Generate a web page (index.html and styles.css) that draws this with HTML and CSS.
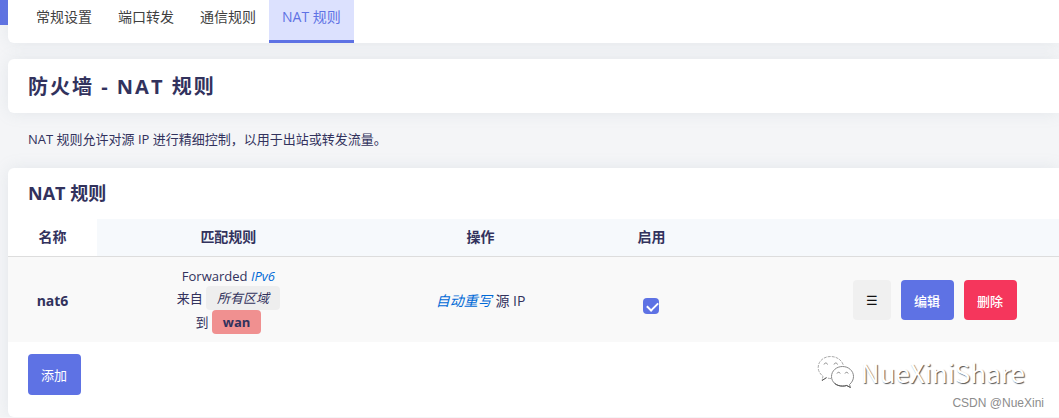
FILE: index.html
```html
<!DOCTYPE html>
<html lang="zh-CN">
<head>
    <meta charset="UTF-8">
    <meta name="viewport" content="width=device-width, initial-scale=1.0">
    <title>防火墙 - NAT 规则</title>
    <link rel="stylesheet" href="styles.css">
</head>
<body>
    <main class="main">
        <nav class="card tabs">
            <a class="tab" href="#general">常规设置</a>
            <a class="tab" href="#forwards">端口转发</a>
            <a class="tab" href="#rules">通信规则</a>
            <a class="tab active" href="#nat">NAT 规则</a>
        </nav>

        <h1 class="card page-title">防火墙 - NAT 规则</h1>

        <p class="description">NAT 规则允许对源 IP 进行精细控制，以用于出站或转发流量。</p>

        <section class="card section">
            <h2 class="section-title">NAT 规则</h2>
            <table class="rules">
                <thead>
                    <tr>
                        <th class="col-name">名称</th>
                        <th class="col-match">匹配规则</th>
                        <th class="col-action">操作</th>
                        <th class="col-enable" id="enable-label">启用</th>
                        <th></th>
                    </tr>
                </thead>
                <tbody>
                    <tr>
                        <td class="name">nat6</td>
                        <td class="match">
                            <div class="family">Forwarded <var>IPv6</var></div>
                            <div class="zone-line">来自 <span class="zone any">所有区域</span></div>
                            <div class="zone-line">到 <span class="zone wan">wan</span></div>
                        </td>
                        <td class="action"><var>自动重写</var> 源 IP</td>
                        <td class="enable"><input class="checkbox" type="checkbox" aria-labelledby="enable-label" checked></td>
                        <td>
                            <div class="row-buttons">
                                <button class="btn drag" type="button">☰</button>
                                <button class="btn edit" type="button">编辑</button>
                                <button class="btn delete" type="button">删除</button>
                            </div>
                        </td>
                    </tr>
                </tbody>
            </table>
            <div class="section-create">
                <button class="btn add" type="button">添加</button>
            </div>
        </section>
    </main>

    <div class="watermark">
        <svg class="bubbles" width="38" height="34" viewBox="0 0 38 34" fill="#fff" stroke="#888" stroke-width="1">
            <path stroke="#aaa" stroke-dasharray="3 1" d="M14 23.500c-1.800 0-3.200-.3-4.600-.8L5 25.500l1-4.300C3 19 1.200 16 1.200 12.500 1.200 6.300 6.500 1.500 13.500 1.500S25 5.500 26.500 10.500"/>
            <path d="M14.500 21.500c0-5.700 5-10 11-10s11 4.300 11 10c0 3.300-1.600 6-4 8l1 3-3.800-2c-1.300.4-2.700.6-4.200.6-6 0-11-3.900-11-9.600z"/>
            <path fill="none" d="M7 9.500c.5-2 3-2 3.500 0M17 9.500c.5-2 3-2 3.500 0M20 18.500c.5-1.600 2.700-1.600 3.200 0M28 18.500c.5-1.600 2.700-1.600 3.200 0"/>
            <path fill="none" stroke="#555" d="M5 25.500l4.400-2.800M33.500 32.500l-3.800-2c-1.300.4-2.700.6-4.200.6-3 0-6-1-8-2.800"/>
        </svg>
        <span class="share">NueXiniShare</span>
    </div>
    <div class="credit">CSDN @NueXini</div>
</body>
</html>
```

FILE: styles.css
```css
* {
    box-sizing: border-box;
}
body {
    margin: 0;
    position: relative;
    font-family: "Open Sans", "Noto Sans CJK SC", sans-serif;
    font-size: 13px;
    color: #32325d;
    background: #f4f5f7;
}
.main {
    padding-left: 8px;
    background: linear-gradient(#5e72e4, #5e72e4) no-repeat 0 0 / 100% 25px;
}
.card {
    background: #fff;
    border-radius: 6px 0 0 6px;
    box-shadow: 0 0 16px rgba(136, 152, 170, 0.15);
}
.tabs {
    display: flex;
    padding-left: 15px;
    border-radius: 0 0 0 6px;
}
.tab {
    padding: 7px 13px 13px;
    font-size: 14px;
    line-height: 20px;
    color: #404040;
    text-decoration: none;
    border-bottom: 3px solid transparent;
}
.tab.active {
    color: #5e72e4;
    background: #dce1fe;
    border-bottom-color: #5e72e4;
}
.page-title {
    margin: 16px 0 0;
    padding: 13px 20px 11px;
    font-size: 20px;
    line-height: 30px;
    font-weight: 700;
    letter-spacing: 2px;
}
.description {
    margin: 0;
    padding: 16px 20px 19px;
    line-height: 20px;
}
.section {
    padding-bottom: 22px;
}
.section-title {
    margin: 0;
    padding: 12px 20px 13px;
    font-size: 18px;
    line-height: 26px;
    font-weight: 700;
}
.rules {
    width: 100%;
    border-collapse: separate;
    border-spacing: 0;
    table-layout: fixed;
    text-align: center;
}
.rules th {
    height: 38px;
    padding: 0 0 2px;
    font-size: 14px;
    line-height: 20px;
    font-weight: 600;
    background: #f6f9fc;
    border-bottom: 1px solid #ddd;
}
.rules .col-name {
    width: 89px;
    background: #fff;
}
.col-match {
    width: 25%;
}
.col-action {
    width: 23%;
}
.col-enable {
    width: 100px;
}
.rules td {
    padding: 9px 0 8px;
    background: #f9f9f9;
}
.name {
    font-size: 14px;
    font-weight: 700;
}
.family {
    line-height: 20px;
}
.zone-line {
    line-height: 24px;
}
.zone {
    display: inline-block;
    padding: 0 11px;
    border-radius: 4px;
}
.zone.any {
    font-style: italic;
    background: #eee;
}
.zone.wan {
    font-weight: 700;
    background: #f09090;
}
.action {
    font-size: 14px;
}
var {
    color: #0069d6;
}
.checkbox {
    appearance: none;
    width: 16px;
    height: 16px;
    margin: 12px 0 0;
    border-radius: 4px;
    vertical-align: middle;
    background: #5e72e4;
}
.checkbox:checked::before {
    content: "";
    display: block;
    width: 9px;
    height: 5px;
    margin: 5px 0 0 4px;
    border: solid #fff;
    border-width: 0 0 2px 2px;
    transform: translateY(-1px) rotate(-45deg);
}
.row-buttons {
    display: flex;
    justify-content: flex-end;
    gap: 10px;
    padding-right: 42px;
}
.btn {
    height: 40px;
    padding: 0 14px 0 13px;
    font: inherit;
    color: #fff;
    border: 0;
    border-radius: 4px;
}
.drag {
    padding: 0 13px;
    color: #111;
    background: #f0f0f0;
}
.edit,
.add {
    background: #5e72e4;
}
.edit,
.delete {
    font-weight: 500;
}
.delete {
    background: #f5365c;
}
.section-create {
    padding: 12px 20px 0;
}
.add {
    height: 41px;
}
.watermark {
    position: absolute;
    right: 34px;
    bottom: 28px;
    display: flex;
    align-items: center;
    gap: 6px;
}
.share {
    font-family: "Noto Sans CJK SC", sans-serif;
    font-size: 26px;
    line-height: 34px;
    color: #fff;
    text-shadow: 1px 1px 1px #555;
}
.credit {
    position: absolute;
    right: 15px;
    bottom: 6px;
    font-family: "Liberation Sans", Arial, sans-serif;
    font-size: 12px;
    line-height: 16px;
    color: #8c8c8c;
}
```
